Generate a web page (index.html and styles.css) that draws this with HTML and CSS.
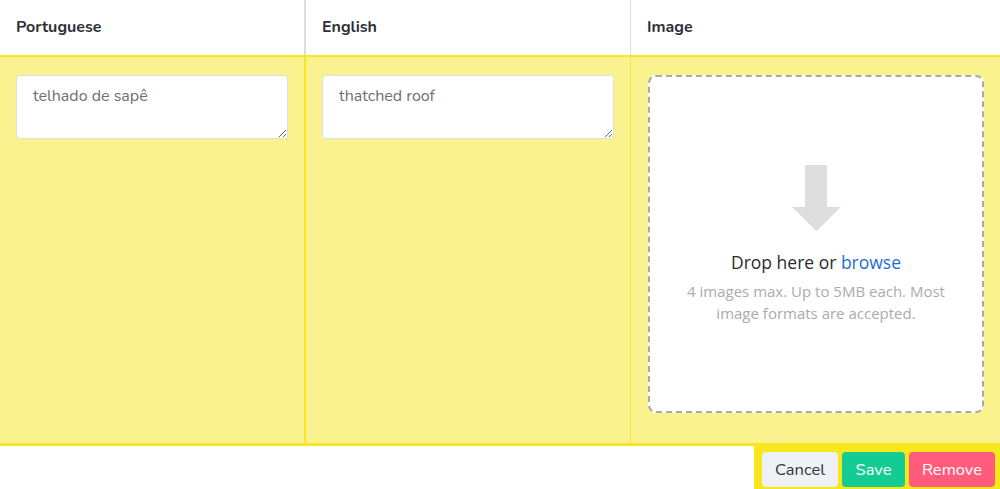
FILE: index.html
```html
<!DOCTYPE html>
<html lang="en">
<head>
<meta charset="utf-8">
<title>Translations</title>
<link rel="stylesheet" href="styles.css">
</head>
<body>
<div class="table">
  <div class="head">
    <div class="th c1">Portuguese</div>
    <div class="th c2">English</div>
    <div class="th c3">Image</div>
  </div>
  <div class="row">
    <div class="td c1"><textarea class="input">telhado de sapê</textarea></div>
    <div class="td c2"><textarea class="input">thatched roof</textarea></div>
    <div class="td c3">
      <div class="drop">
        <svg class="arrow" width="49" height="66" viewBox="0 0 49 66"><path d="M13 0H35V42H49L24.5 66L0 42H13Z" fill="#dedede"/></svg>
        <div class="drop-title">Drop here or <span class="link">browse</span></div>
        <div class="drop-help">4 images max. Up to 5MB each. Most image formats are accepted.</div>
      </div>
    </div>
  </div>
  <div class="foot">
    <div class="actions">
      <button class="btn cancel">Cancel</button>
      <button class="btn save">Save</button>
      <button class="btn remove">Remove</button>
    </div>
  </div>
</div>
</body>
</html>
```
FILE: styles.css
```css
html, body {
  margin: 0;
  padding: 0;
  background: #fff;
  font-family: "Nunito", Lato, "Open Sans", sans-serif;
  color: #363636;
  overflow: hidden;
}
.table {
  width: 1000px;
}
.head, .row {
  display: grid;
  grid-template-columns: 304px 326px 1fr;
}
.th {
  height: 55px;
  box-sizing: border-box;
  padding: 17px 16px 0;
  font-weight: 700;
  font-size: 16px;
  line-height: 20px;
  color: #2b2f36;
}
.head .c2 { border-left: 2px solid #dddddd; }
.head .c3 { border-left: 1px solid #dcdde3; }
.row {
  background: #faf28f;
  border-top: 2px solid #f8e622;
  border-bottom: 3px solid #f8e622;
  height: 386px;
}
.td {
  padding: 18px 16px 0;
}
.row .c2 { border-left: 2px solid #f8e622; }
.row .c3 { border-left: 1px solid #f5e43a; padding-left: 17px; }
.input {
  display: block;
  width: 100%;
  box-sizing: border-box;
  height: 64px;
  border: 1px solid #dcdfe4;
  border-radius: 4px;
  padding: 9px 16px;
  font-family: inherit;
  font-size: 16px;
  line-height: 22px;
  color: #6a6f78;
  background: #fff;
  resize: vertical;
  outline: none;
}
.drop {
  height: 338px;
  box-sizing: border-box;
  border: 2px dashed #a9a9a9;
  border-radius: 8px;
  background: #fff;
  display: flex;
  flex-direction: column;
  align-items: center;
  justify-content: center;
  font-family: "Open Sans", "Segoe UI", sans-serif;
  text-align: center;
}
.arrow { display: block; margin-bottom: 18px; }
.drop-title {
  font-size: 17.5px;
  line-height: 26px;
  color: #2b2b2b;
}
.link { color: #1f6bd6; }
.drop-help {
  margin-top: 5px;
  max-width: 280px;
  font-size: 15px;
  line-height: 22px;
  color: #ababab;
}
.foot {
  display: flex;
  justify-content: flex-end;
}
.actions {
  background: #f8e71c;
  width: 246px;
  box-sizing: border-box;
  height: 43px;
  padding: 6px 4px 0 8px;
  display: flex;
  gap: 4px;
}
.btn {
  height: 35px;
  border: none;
  border-radius: 4px;
  font-family: inherit;
  font-size: 16.5px;
  padding: 0 10px;
  cursor: pointer;
}
.cancel { background: #eef1f6; color: #363636; width: 76px; }
.save { background: #12cc94; color: #fff; width: 63px; }
.remove { background: #ff5c7c; color: #fff; width: 86px; }
```
